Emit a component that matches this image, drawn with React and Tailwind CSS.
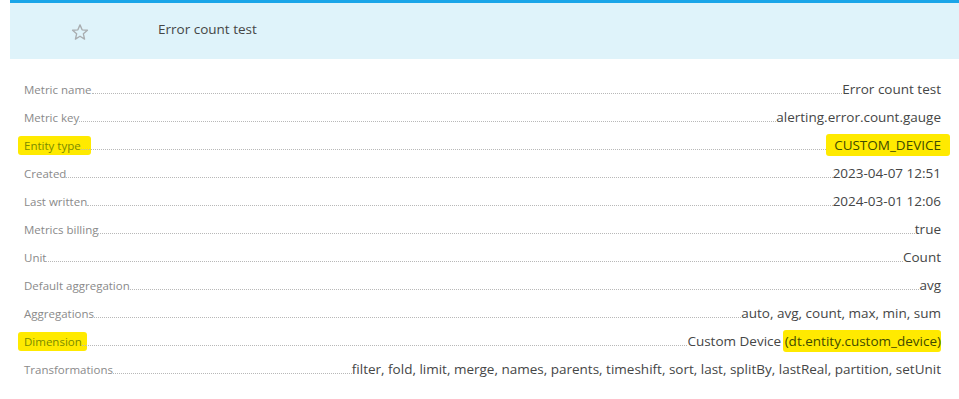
import React from "react";

const rows = [
  { label: "Metric name", value: "Error count test" },
  { label: "Metric key", value: "alerting.error.count.gauge" },
  { label: "Entity type", value: "CUSTOM_DEVICE", hlLabel: true, hlValue: true },
  { label: "Created", value: "2023-04-07 12:51" },
  { label: "Last written", value: "2024-03-01 12:06" },
  { label: "Metrics billing", value: "true" },
  { label: "Unit", value: "Count" },
  { label: "Default aggregation", value: "avg" },
  { label: "Aggregations", value: "auto, avg, count, max, min, sum" },
  { label: "Dimension", value: "dim", hlLabel: true },
  {
    label: "Transformations",
    value:
      "filter, fold, limit, merge, names, parents, timeshift, sort, last, splitBy, lastReal, partition, setUnit",
  },
];

function Mark({ children, className = "" }) {
  return (
    <span className={"bg-[#ffea00] rounded-[3px] py-[2px] " + className}>{children}</span>
  );
}

export default function App() {
  return (
    <div
      className="w-[959px] h-[399px] bg-white overflow-hidden"
      style={{ fontFamily: '"Open Sans", "Noto Sans", sans-serif' }}
    >
      <div className="ml-[10px]">
        <div className="h-[3px] bg-[#1aa5e8]" />
        <div className="h-[56px] bg-[#dff3fa] flex items-center">
          <div className="w-[138px] flex justify-center">
            <svg width="18" height="18" viewBox="0 0 24 24" className="mt-[2px] ml-[1px]">
              <path
                d="M12 2.5l2.8 6.6 7.1.6-5.4 4.7 1.6 7-6.1-3.7-6.1 3.7 1.6-7L2.1 9.7l7.1-.6z"
                fill="none"
                stroke="#a9adb0"
                strokeWidth="1.8"
                strokeLinejoin="round"
              />
            </svg>
          </div>
          <div className="pl-[10px] text-[13.5px] text-[#454646] -mt-[3px]">Error count test</div>
        </div>
        <div className="pt-[16px] pl-[14px] pr-[18px]">
          {rows.map((r) => (
            <div key={r.label} className="h-[28px] flex items-center">
              <div className="flex w-full items-end">
                <span
                  className={
                    "text-[11.5px] whitespace-nowrap leading-[16px] " +
                    (r.hlLabel ? "text-[#7a8a00]" : "text-[#8a8a8a]")
                  }
                >
                  {r.hlLabel ? (
                    <Mark className={r.label === "Entity type" ? "pl-[6px] -ml-[6px] pr-[10px] -mr-[10px]" : "pl-[6px] -ml-[6px] pr-[5px] -mr-[5px]"}>
                      {r.label}
                    </Mark>
                  ) : (
                    r.label
                  )}
                </span>
                <span className="flex-1 mb-[4px] border-b border-dotted border-[#b8b8b8]" />
                <span className="text-[13.5px] whitespace-nowrap leading-[18px] text-[#454646]">
                  {r.value === "dim" ? (
                    <>
                      {"Custom Device "}
                      <Mark className="text-[#3f4b00] pl-[2px] -ml-[2px] pr-[0px]">(dt.entity.custom_device)</Mark>
                    </>
                  ) : r.hlValue ? (
                    <Mark className="text-[#3f4b00] pl-[8px] -ml-[8px] pr-[9px] -mr-[9px]">{r.value}</Mark>
                  ) : (
                    r.value
                  )}
                </span>
              </div>
            </div>
          ))}
        </div>
      </div>
    </div>
  );
}
